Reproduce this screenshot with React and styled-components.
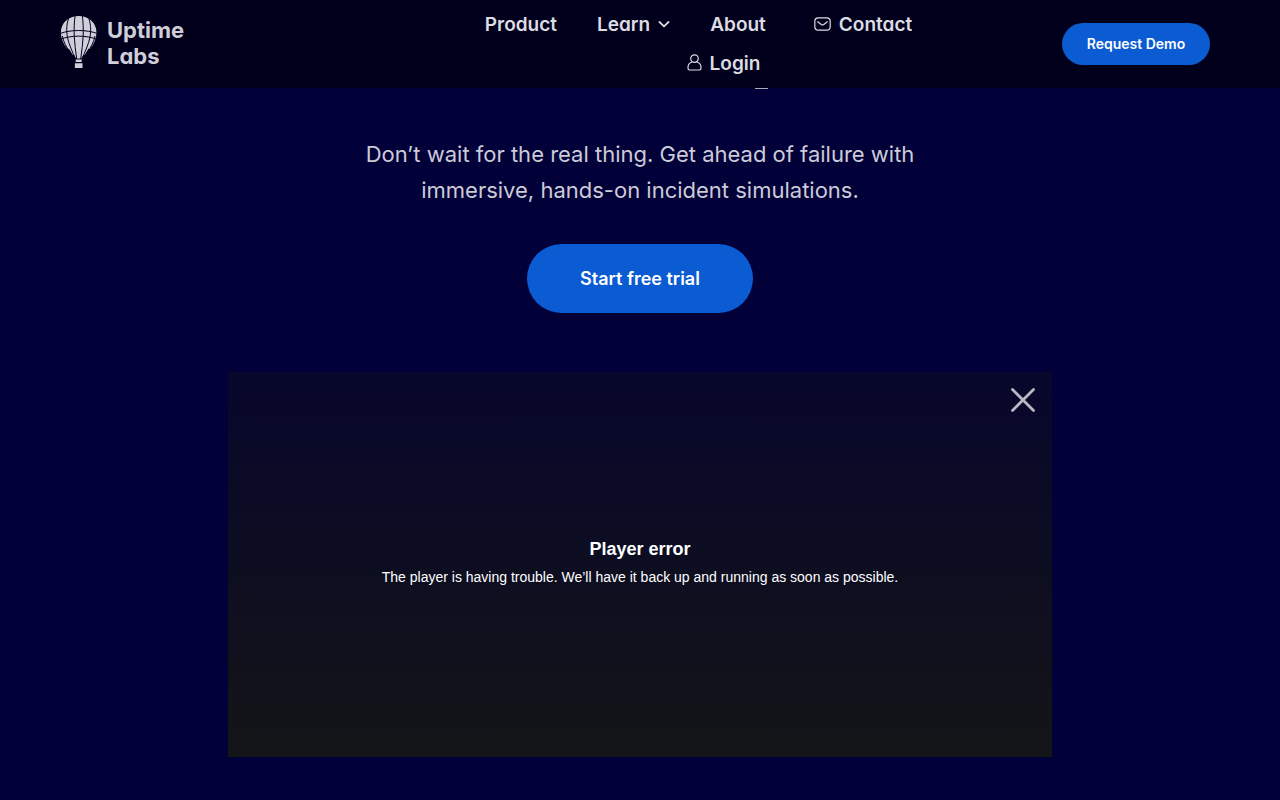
import React from "react";
import styled, { createGlobalStyle } from "styled-components";

const GlobalStyle = createGlobalStyle`
  *, *::before, *::after { box-sizing: border-box; }
  html, body { margin: 0; min-height: 100%; background: #020039; }
  body { font-family: Inter, "Liberation Sans", sans-serif; color: #d0d0da; }
  a { color: inherit; text-decoration: none; }
`;

const Header = styled.header`
  position: sticky;
  top: 0;
  z-index: 2;
  display: flex;
  align-items: center;
  min-height: 88px;
  padding: 0 70px 0 60px;
  background: #00001d;
`;

const Logo = styled.a`
  display: flex;
  align-items: center;
  gap: 10px;
  flex: none;
  padding-bottom: 2px;
  color: #cfced9;
  font-size: 22px;
  font-weight: 700;
  line-height: 26px;
  font-feature-settings: "cv11";
`;

const LogoName = styled.span`
  display: block;
  width: 80px;
`;

const Nav = styled.nav`
  flex: 1;
  display: flex;
  justify-content: center;
  padding-left: 148px;
`;

const NavList = styled.ul`
  display: flex;
  flex-wrap: wrap;
  justify-content: center;
  column-gap: 40px;
  max-width: 520px;
  margin: 0;
  padding: 0;
  list-style: none;
`;

const NavItem = styled.li`
  padding-left: ${({ $indent }) => $indent || 0}px;
`;

const NavLink = styled.a`
  display: flex;
  align-items: center;
  gap: 8px;
  color: #dcdce2;
  font-size: 19px;
  font-weight: 600;
  line-height: 39px;
  font-feature-settings: "cv11";

  svg {
    margin-bottom: 2px;
  }
`;

const PillButton = styled.button`
  flex: none;
  border: 0;
  border-radius: 35px;
  background: #0b5bd3;
  color: #fff;
  font-family: inherit;
  cursor: pointer;
`;

const DemoButton = styled(PillButton)`
  width: 148px;
  height: 42px;
  padding: 0 0 2px;
  font-size: 14px;
  font-weight: 600;
  font-feature-settings: "cv11";
`;

const TrialButton = styled(PillButton)`
  width: 226px;
  height: 69px;
  margin-top: 36px;
  font-size: 18px;
  font-weight: 600;
`;

const Hero = styled.main`
  display: flex;
  flex-direction: column;
  align-items: center;
  padding: 0 24px 43px;
`;

const HeadingTail = styled.div`
  width: 13px;
  height: 1px;
  margin-left: 243px;
  background: #a9a8bb;
`;

const Lead = styled.p`
  max-width: 600px;
  margin: 47px 0 0;
  color: #cccbd7;
  font-size: 22px;
  line-height: 36px;
  text-align: center;
`;

const Player = styled.section`
  position: relative;
  display: flex;
  flex-direction: column;
  align-items: center;
  justify-content: center;
  width: 100%;
  max-width: 824px;
  min-height: 385px;
  margin-top: 59px;
  padding-bottom: 4px;
  background: linear-gradient(#07062c, #141517);
  color: #fff;
  font-family: "Liberation Sans", Arial, sans-serif;
  text-align: center;
`;

const CloseButton = styled.button`
  position: absolute;
  top: 15px;
  right: 16px;
  display: flex;
  padding: 0;
  border: 0;
  background: none;
  color: #b9b9c4;
  cursor: pointer;
`;

const ErrorTitle = styled.h2`
  margin: 0;
  font-size: 18px;
  line-height: 28px;
`;

const ErrorText = styled.p`
  margin: 0;
  font-size: 14px;
  line-height: 28px;
`;

function Balloon() {
  return (
    <svg width="37" height="56" viewBox="0 0 37 56" aria-hidden="true">
      <path
        d="M18.700 1C8.500 1 .9 8 .9 17.500c0 6 2.600 11.500 6.600 16.500l1.500-.3 3.800 6.300 1.200-.2 2 3.700h5.400l2-3.700 1.200.2 3.800-6.300 1.500.3c4-5 6.600-10.500 6.600-16.500C36.500 8 28.900 1 18.700 1z"
        fill="#cfced9"
      />
      <g fill="none" stroke="#00001d" strokeWidth="1">
        <path d="M15.200 0C14.200 6 14 14 14.200 21c.4 8 1.500 15 2.500 23" />
        <path d="M22.200 0c1 6 1.200 14 1 21-.4 8-1.500 15-2.500 23" />
        <path d="M9.500 1C6.500 8 6.200 15 7.400 22c1.500 8 5 14 7.800 22" />
        <path d="M27.900 1c3 7 3.300 14 2.100 21-1.500 8-5 14-7.800 22" />
        <path d="M2.400 21c1.500 8 6 14 11.400 22" />
        <path d="M35 21c-1.500 8-6 14-11.400 22" />
        <path d="M0 18.500c11-4 26.500-4 37.400 0" />
        <path d="M0 24.500c11-4.500 26.500-4.500 37.400 0" />
      </g>
      <path d="M15.700 44.600h6v2.400h-6zM14.900 48.300h7.600v4.600h-7.600z" fill="#cfced9" />
    </svg>
  );
}

function Chevron() {
  return (
    <svg width="12" height="8" viewBox="0 0 12 8" fill="none" stroke="currentColor" strokeWidth="1.800" strokeLinecap="round" strokeLinejoin="round" aria-hidden="true">
      <path d="M1.500 2l4.500 4.300L10.500 2" />
    </svg>
  );
}

function MailIcon() {
  return (
    <svg width="17" height="14" viewBox="0 0 17 14" fill="none" stroke="currentColor" strokeWidth="1.200" strokeLinecap="round" strokeLinejoin="round" aria-hidden="true">
      <rect x="0.800" y="0.800" width="15.400" height="12.400" rx="3.500" />
      <path d="M3.700 4.800l3.500 2.700q1.300.9 2.600 0l3.500-2.700" />
    </svg>
  );
}

function UserIcon() {
  return (
    <svg width="15" height="17" viewBox="0 0 15 17" fill="none" stroke="currentColor" strokeWidth="1.200" strokeLinejoin="round" aria-hidden="true">
      <circle cx="7.500" cy="4.600" r="3.800" />
      <path d="M4.900 8C2.500 8.800 1 11 1 13.500v.8q0 1.700 1.700 1.700h9.600q1.700 0 1.700-1.700v-.8C14 11 12.500 8.800 10.100 8" />
    </svg>
  );
}

function CloseIcon() {
  return (
    <svg width="26" height="26" viewBox="0 0 26 26" fill="none" stroke="currentColor" strokeWidth="2.800" strokeLinecap="round" aria-hidden="true">
      <path d="M2.500 2.500l21 21M23.500 2.500l-21 21" />
    </svg>
  );
}

export default function App() {
  return (
    <>
      <GlobalStyle />
      <Header>
        <Logo href="#home">
          <Balloon />
          <LogoName>Uptime Labs</LogoName>
        </Logo>
        <Nav aria-label="Main">
          <NavList>
            <NavItem><NavLink href="#product">Product</NavLink></NavItem>
            <NavItem><NavLink href="#learn">Learn <Chevron /></NavLink></NavItem>
            <NavItem><NavLink href="#about">About</NavLink></NavItem>
            <NavItem $indent={8}><NavLink href="#contact"><MailIcon />Contact</NavLink></NavItem>
            <NavItem $indent={50}><NavLink href="#login"><UserIcon />Login</NavLink></NavItem>
          </NavList>
        </Nav>
        <DemoButton type="button">Request Demo</DemoButton>
      </Header>
      <Hero>
        <HeadingTail aria-hidden="true" />
        <Lead>
          Don’t wait for the real thing. Get ahead of failure with immersive,
          hands-on incident simulations.
        </Lead>
        <TrialButton type="button">Start free trial</TrialButton>
        <Player aria-label="Video player">
          <CloseButton type="button" aria-label="Close"><CloseIcon /></CloseButton>
          <ErrorTitle>Player error</ErrorTitle>
          <ErrorText>
            The player is having trouble. We’ll have it back up and running as
            soon as possible.
          </ErrorText>
        </Player>
      </Hero>
    </>
  );
}
